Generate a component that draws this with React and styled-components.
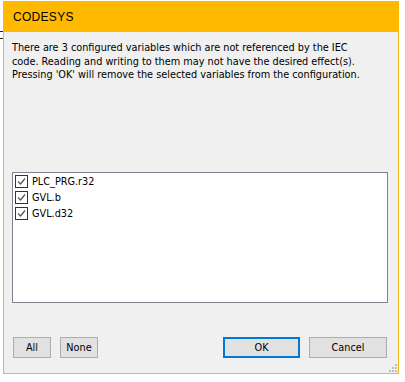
import React, { useState } from 'react';
import styled, { createGlobalStyle } from 'styled-components';

const GlobalStyle = createGlobalStyle`
  html, body {
    margin: 0;
    padding: 0;
    background: #fff;
  }
  body {
    font-family: "DejaVu Sans Condensed", "DejaVu Sans", sans-serif;
    font-stretch: condensed;
    font-size: 10.8px;
    color: #000;
  }
`;

const Page = styled.div`
  position: relative;
  width: 405px;
  height: 382px;
  padding: 1px 0 0 3px;
  box-sizing: border-box;
`;

const Mark = styled.div`
  position: absolute;
  left: 0;
  top: ${p => p.$top}px;
  width: 3px;
  height: 1px;
  background: #222;
`;

const Dialog = styled.div`
  width: 396px;
  height: 373px;
  box-sizing: border-box;
  border: 1px solid #f2b91e;
  border-top: none;
  background: #f0f0f0;
  display: flex;
  flex-direction: column;
  position: relative;
`;

const TitleBar = styled.div`
  height: 31px;
  background: #ffb900;
  margin: 0 -1px;
  display: flex;
  align-items: center;
  padding-left: 10px;
  font-family: "Liberation Sans", Arial, sans-serif;
  font-stretch: normal;
  font-size: 12px;
  letter-spacing: 0.3px;
`;

const Body = styled.div`
  flex: 1;
  display: flex;
  flex-direction: column;
  padding: 9px 11px 0 8px;
`;

const Message = styled.p`
  margin: 0;
  line-height: 13.5px;
`;

const List = styled.div`
  margin-top: 90px;
  margin-right: -1px;
  height: 131px;
  box-sizing: border-box;
  border: 1px solid #82828e;
  background: #fff;
  padding: 1px 2px;
  display: flex;
  flex-direction: column;
`;

const Item = styled.label`
  display: flex;
  align-items: center;
  height: 16px;
  gap: 4px;
  cursor: default;
`;

const Box = styled.span`
  width: 11px;
  height: 11px;
  border: 1px solid #333;
  background: #fff;
  display: flex;
  align-items: center;
  justify-content: center;
`;

const Footer = styled.div`
  display: flex;
  align-items: center;
  margin-top: 34px;
  gap: 9px;
  padding-left: 1px;
`;

const Spacer = styled.div`
  flex: 1;
`;

const Button = styled.button`
  width: ${p => p.$w}px;
  height: 21px;
  box-sizing: border-box;
  background: #e1e1e1;
  border: ${p => (p.$primary ? '2px solid #0078d7' : '1px solid #adadad')};
  font: inherit;
  color: #000;
  padding: 0;
  margin: 0;
`;

const Grip = styled.svg`
  position: absolute;
  right: 1px;
  bottom: 1px;
`;

const items = ['PLC_PRG.r32', 'GVL.b', 'GVL.d32'];

function Check({ on }) {
  return (
    <Box>
      {on && (
        <svg width="9" height="9" viewBox="0 0 9 9">
          <path d="M1 4.5 L3.5 7 L8 1.5" fill="none" stroke="#555" strokeWidth="1.2" />
        </svg>
      )}
    </Box>
  );
}

export default function App() {
  const [checked, setChecked] = useState(items.map(() => true));

  return (
    <Page>
      <GlobalStyle />
      <Mark $top={31} />
      <Mark $top={38} />
      <Dialog>
        <TitleBar>CODESYS</TitleBar>
        <Body>
          <Message>
            There are 3 configured variables which are not referenced by the IEC
            <br />
            code. Reading and writing to them may not have the desired effect(s).
            <br />
            Pressing 'OK' will remove the selected variables from the configuration.
          </Message>
          <List>
            {items.map((name, i) => (
              <Item
                key={name}
                onClick={() => setChecked(c => c.map((v, j) => (j === i ? !v : v)))}
              >
                <Check on={checked[i]} />
                {name}
              </Item>
            ))}
          </List>
          <Footer>
            <Button $w={38} onClick={() => setChecked(items.map(() => true))}>All</Button>
            <Button $w={38} onClick={() => setChecked(items.map(() => false))}>None</Button>
            <Spacer />
            <Button $w={77} $primary>OK</Button>
            <Button $w={78}>Cancel</Button>
          </Footer>
        </Body>
        <Grip width="8" height="8" viewBox="0 0 8 8">
          <rect x="6" y="0" width="2" height="2" fill="#bfbfbf" />
          <rect x="3" y="3" width="2" height="2" fill="#bfbfbf" />
          <rect x="6" y="3" width="2" height="2" fill="#bfbfbf" />
          <rect x="0" y="6" width="2" height="2" fill="#bfbfbf" />
          <rect x="3" y="6" width="2" height="2" fill="#bfbfbf" />
          <rect x="6" y="6" width="2" height="2" fill="#bfbfbf" />
        </Grip>
      </Dialog>
    </Page>
  );
}
